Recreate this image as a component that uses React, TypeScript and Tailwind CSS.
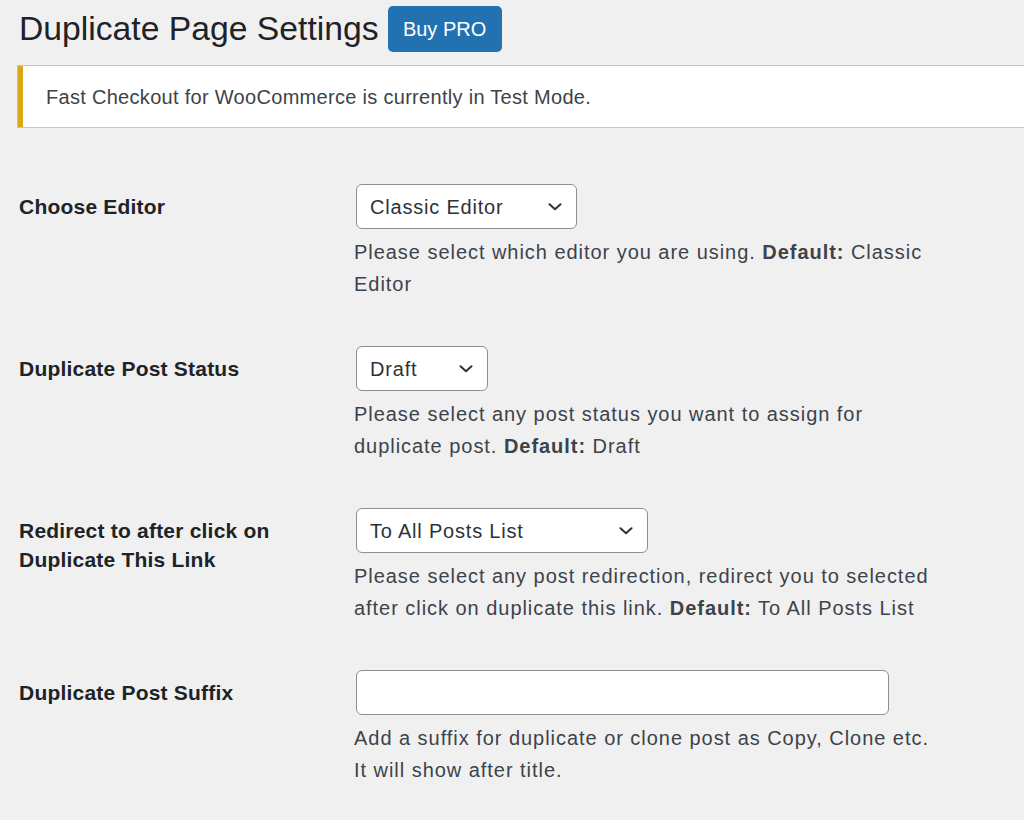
const font = "font-['Liberation_Sans',Arial,sans-serif]";

type Row = {
  label: string[];
  control: { kind: 'select'; value: string; width: string } | { kind: 'input'; width: string };
  desc: React.ReactNode;
};

function Chevron() {
  return (
    <svg width="14" height="8" viewBox="0 0 14 8" fill="none" className="shrink-0">
      <path d="M1.5 1.2 7 6.3l5.5-5.1" stroke="#2c3338" strokeWidth="2" strokeLinecap="round" strokeLinejoin="round" />
    </svg>
  );
}

const rows: Row[] = [
  {
    label: ['Choose Editor'],
    control: { kind: 'select', value: 'Classic Editor', width: 'w-[221px]' },
    desc: (
      <>
        Please select which editor you are using. <b className="font-bold">Default:</b> Classic
        <br />
        Editor
      </>
    ),
  },
  {
    label: ['Duplicate Post Status'],
    control: { kind: 'select', value: 'Draft', width: 'w-[132px]' },
    desc: (
      <>
        Please select any post status you want to assign for
        <br />
        duplicate post. <b className="font-bold">Default:</b> Draft
      </>
    ),
  },
  {
    label: ['Redirect to after click on', 'Duplicate This Link'],
    control: { kind: 'select', value: 'To All Posts List', width: 'w-[292px]' },
    desc: (
      <>
        Please select any post redirection, redirect you to selected
        <br />
        after click on duplicate this link. <b className="font-bold">Default:</b> To All Posts List
      </>
    ),
  },
  {
    label: ['Duplicate Post Suffix'],
    control: { kind: 'input', width: 'w-[533px]' },
    desc: (
      <>
        Add a suffix for duplicate or clone post as Copy, Clone etc.
        <br />
        It will show after title.
      </>
    ),
  },
];

export default function App() {
  return (
    <div className={`min-h-[820px] w-[1024px] overflow-hidden bg-[#f0f0f1] ${font}`}>
      {/* Encabezado */}
      <div className="flex items-center gap-[9px] pl-[19px] pt-[6px]">
        <h1 className="text-[33.7px] leading-none font-normal text-[#1d2327]">Duplicate Page Settings</h1>
        <button className="h-[46px] w-[114px] rounded-[5px] bg-[#2271b1] text-[20px] text-white">Buy PRO</button>
      </div>

      {/* Aviso */}
      <div className="ml-[18px] mt-[14px] flex h-[61px] items-center border-l-[5px] border-[#dba617] bg-white pl-[23px] shadow-[0_0_0_1px_#c3c4c7,0_1px_1px_rgba(0,0,0,0.04)]">
        <p className="text-[20px] tracking-[0.015em] text-[#3c434a]">Fast Checkout for WooCommerce is currently in Test Mode.</p>
      </div>

      {/* Tabla de ajustes */}
      <div className="mt-[36px]">
        {rows.map((r, i) => (
          <div key={i} className="grid grid-cols-[337px_1fr] pl-[19px] pt-[21px] pb-[25px]">
            <div className="pt-[8px] text-[21px] leading-[29px] tracking-[0.01em] font-bold text-[#1d2327]">
              {r.label.map((l, j) => (
                <div key={j}>{l}</div>
              ))}
            </div>
            <div>
              {r.control.kind === 'select' ? (
                <div
                  className={`flex h-[45px] ${r.control.width} items-center justify-between rounded-[6px] border border-[#8c8f94] bg-white pl-[13px] pr-[14px] text-[20px] text-[#2c3338]`}
                >
                  <span className="tracking-[0.04em]">{r.control.value}</span>
                  <Chevron />
                </div>
              ) : (
                <div className={`h-[45px] ${r.control.width} rounded-[6px] border border-[#8c8f94] bg-white`} />
              )}
              <p className="mt-[7px] -ml-[2px] text-[20px] leading-[32px] tracking-[0.048em] text-[#3c434a]">{r.desc}</p>
            </div>
          </div>
        ))}
      </div>
    </div>
  );
}
